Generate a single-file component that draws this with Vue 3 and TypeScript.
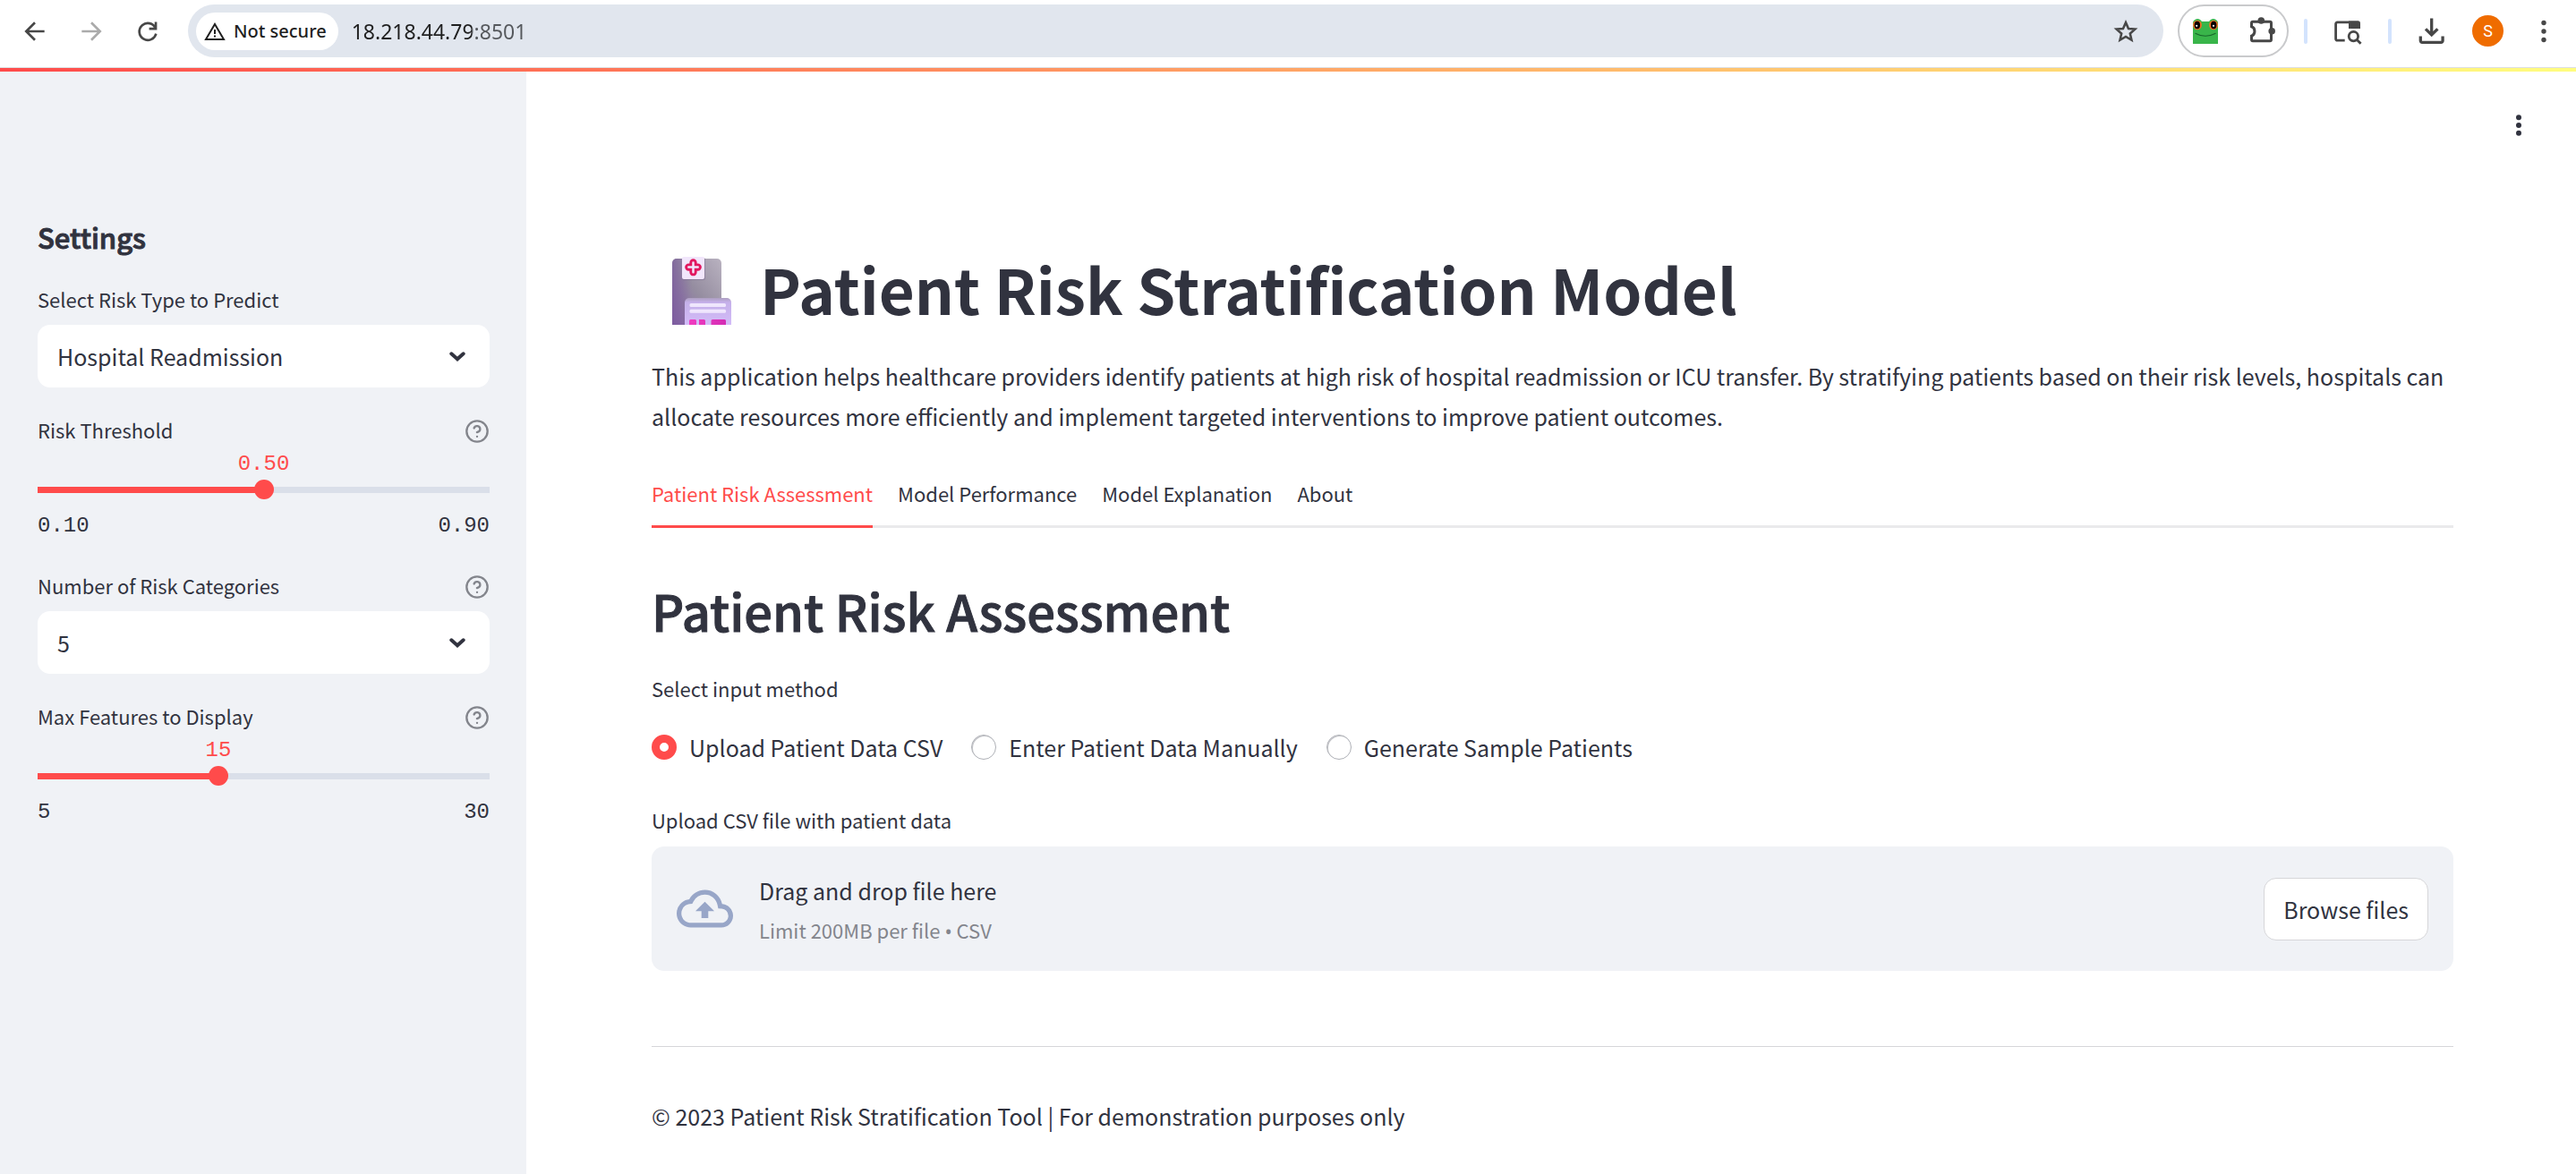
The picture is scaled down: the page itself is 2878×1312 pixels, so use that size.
<script setup lang="ts">
import { computed, ref } from 'vue'

interface Slider {
  min: number
  max: number
  step: number
  digits: number
}

const address = ref('18.218.44.79:8501')

const riskTypes = ['Hospital Readmission', 'ICU Transfer']
const riskType = ref(riskTypes[0])

const categoryOptions = [3, 4, 5]
const categories = ref(5)

const thresholdRange: Slider = { min: 0.1, max: 0.9, step: 0.05, digits: 2 }
const threshold = ref(0.5)

const featureRange: Slider = { min: 5, max: 30, step: 1, digits: 0 }
const features = ref(15)

const percent = (value: number, s: Slider): string =>
  `${((value - s.min) / (s.max - s.min)) * 100}%`

const thresholdAt = computed(() => percent(Number(threshold.value), thresholdRange))
const featuresAt = computed(() => percent(Number(features.value), featureRange))

const tabs = ['Patient Risk Assessment', 'Model Performance', 'Model Explanation', 'About']
const activeTab = ref(tabs[0])

const methods = ['Upload Patient Data CSV', 'Enter Patient Data Manually', 'Generate Sample Patients']
const method = ref(methods[0])

const fileInput = ref<HTMLInputElement | null>(null)
const browse = (): void => fileInput.value?.click()
</script>

<template>
  <div class="window">
    <header class="toolbar">
      <div class="nav">
        <button class="icon-btn" type="button" aria-label="Back">
          <svg viewBox="0 0 24 24" fill="none" stroke="#474747" stroke-width="2"><path d="M20 12H5.5M12 4.7L4.7 12l7.3 7.3" /></svg>
        </button>
        <button class="icon-btn" type="button" aria-label="Forward">
          <svg viewBox="0 0 24 24" fill="none" stroke="#ababab" stroke-width="2"><path d="M4 12h14.500M12 4.700l7.300 7.300-7.300 7.300" /></svg>
        </button>
        <button class="icon-btn" type="button" aria-label="Reload">
          <svg viewBox="0 0 24 24" fill="none" stroke="#474747" stroke-width="2"><path d="M18.800 4.200v5.600h-5.600M18.600 9.400A7.100 7.100 0 1 0 19 14" /></svg>
        </button>
      </div>

      <div class="omnibox">
        <button class="chip" type="button">
          <svg class="warn" viewBox="0 0 24 22" fill="none" stroke="#1f1f1f" stroke-width="2">
            <path d="M12 3L22 20H2z" /><path d="M12 9v5M12 15.500v2" />
          </svg>
          <span>Not secure</span>
        </button>
        <input v-model="address" class="address" type="text" aria-label="Address" />
        <button class="icon-btn" type="button" aria-label="Bookmark this page">
          <svg viewBox="0 0 24 24" fill="none" stroke="#474747" stroke-width="1.900">
            <path d="M12 4.600l2.250 5.100 5.550.5-4.200 3.700 1.250 5.400L12 16.450 7.150 19.300l1.250-5.400-4.200-3.700 5.550-.5z" />
          </svg>
        </button>
      </div>

      <div class="extensions">
        <button class="frog-btn" type="button" aria-label="Frog extension">
          <svg viewBox="0 0 28 28">
            <path d="M0 28V8h28v20z" fill="#39b54a" />
            <path d="M5 3h18v10H5z" fill="#39b54a" />
            <circle cx="5.200" cy="5.500" r="5.400" fill="#39b54a" /><circle cx="22.800" cy="5.500" r="5.400" fill="#39b54a" />
            <ellipse cx="5" cy="7" rx="4.900" ry="5.200" fill="#f26f21" /><ellipse cx="23" cy="7" rx="4.900" ry="5.200" fill="#f26f21" />
            <ellipse cx="4.800" cy="7" rx="3.200" ry="4.300" fill="#000" /><ellipse cx="23.200" cy="7" rx="3.200" ry="4.300" fill="#000" />
            <circle cx="4.200" cy="7.800" r="1.100" fill="#fff" /><circle cx="23" cy="7.800" r="1.100" fill="#fff" />
            <path d="M2.500 16.200q11.500 6 23 0" fill="none" stroke="#17662a" stroke-width="1.100" />
          </svg>
        </button>
        <button class="icon-btn" type="button" aria-label="Extensions">
          <svg viewBox="0 0 32 32">
            <path d="M3.500 10.700V6.800a1.500 1.500 0 0 1 1.500-1.500h19a1.500 1.500 0 0 1 1.500 1.500v18.400a1.500 1.500 0 0 1-1.500 1.500H5a1.500 1.500 0 0 1-1.500-1.500v-4.100c4.600-1.400 4.600-9 0-10.400z" fill="none" stroke="#474747" stroke-width="3" />
            <circle cx="14.300" cy="4" r="3.800" fill="#474747" /><circle cx="26.200" cy="15.800" r="3.800" fill="#474747" />
          </svg>
        </button>
      </div>

      <div class="actions">
        <span class="divider"></span>
        <button class="icon-btn" type="button" aria-label="Search side panel">
          <svg viewBox="0 0 32 32" fill="none" stroke="#474747" stroke-width="2.800">
            <path d="M12.700 26.200H4.400a1.800 1.800 0 0 1-1.800-1.800V7.700a1.800 1.800 0 0 1 1.800-1.800H28.200" />
            <path d="M17 4.500h11a2 2 0 0 1 2 2v6.500H17z" fill="#474747" stroke="none" />
            <circle cx="22.400" cy="21.600" r="5.200" /><path d="M26 25.200l4.600 4.600" />
          </svg>
        </button>
        <span class="divider"></span>
        <button class="icon-btn" type="button" aria-label="Downloads">
          <svg viewBox="0 0 32 32" fill="none" stroke="#474747" stroke-width="3.300">
            <path d="M15.700 1.500v18M9 13.300l6.700 6.700 6.700-6.700" />
            <path d="M3.300 21.500v5a1.800 1.800 0 0 0 1.800 1.800h21.200a1.800 1.800 0 0 0 1.800-1.800v-5" />
          </svg>
        </button>
        <button class="avatar" type="button" aria-label="Profile">S</button>
        <button class="icon-btn" type="button" aria-label="Browser menu">
          <svg viewBox="0 0 32 32" fill="#474747">
            <circle cx="16" cy="6.500" r="2.700" /><circle cx="16" cy="16" r="2.700" /><circle cx="16" cy="25.500" r="2.700" />
          </svg>
        </button>
      </div>
    </header>
    <div class="decoration"></div>

    <div class="app">
      <aside class="sidebar">
        <h2 class="side-title">Settings</h2>

        <div class="widget">
          <div class="label-row"><label for="risk-type">Select Risk Type to Predict</label></div>
          <div class="select-box">
            <select id="risk-type" v-model="riskType">
              <option v-for="t in riskTypes" :key="t" :value="t">{{ t }}</option>
            </select>
            <svg class="chevron" viewBox="0 0 18 11"><path d="M2.300 2.300L9 8.300l6.700-6" /></svg>
          </div>
        </div>

        <div class="widget slider">
          <div class="label-row">
            <label for="threshold">Risk Threshold</label>
            <button class="help" type="button" aria-label="Help for Risk Threshold">
              <svg viewBox="0 0 24 24"><circle cx="12" cy="12" r="10" /><path d="M9.090 9a3 3 0 0 1 5.830 1c0 2-3 3-3 3M12 17h.010" /></svg>
            </button>
          </div>
          <div class="value-row">
            <output class="value" for="threshold" :style="{ left: thresholdAt }">{{ Number(threshold).toFixed(thresholdRange.digits) }}</output>
          </div>
          <div class="track" :style="{ '--fill': thresholdAt }">
            <input id="threshold" v-model.number="threshold" type="range" :min="thresholdRange.min" :max="thresholdRange.max" :step="thresholdRange.step" />
          </div>
          <div class="ticks"><span>0.10</span><span>0.90</span></div>
        </div>

        <div class="widget">
          <div class="label-row">
            <label for="categories">Number of Risk Categories</label>
            <button class="help" type="button" aria-label="Help for Number of Risk Categories">
              <svg viewBox="0 0 24 24"><circle cx="12" cy="12" r="10" /><path d="M9.090 9a3 3 0 0 1 5.830 1c0 2-3 3-3 3M12 17h.010" /></svg>
            </button>
          </div>
          <div class="select-box">
            <select id="categories" v-model="categories">
              <option v-for="c in categoryOptions" :key="c" :value="c">{{ c }}</option>
            </select>
            <svg class="chevron" viewBox="0 0 18 11"><path d="M2.300 2.300L9 8.300l6.700-6" /></svg>
          </div>
        </div>

        <div class="widget slider">
          <div class="label-row">
            <label for="features">Max Features to Display</label>
            <button class="help" type="button" aria-label="Help for Max Features to Display">
              <svg viewBox="0 0 24 24"><circle cx="12" cy="12" r="10" /><path d="M9.090 9a3 3 0 0 1 5.830 1c0 2-3 3-3 3M12 17h.010" /></svg>
            </button>
          </div>
          <div class="value-row">
            <output class="value" for="features" :style="{ left: featuresAt }">{{ features }}</output>
          </div>
          <div class="track" :style="{ '--fill': featuresAt }">
            <input id="features" v-model.number="features" type="range" :min="featureRange.min" :max="featureRange.max" :step="featureRange.step" />
          </div>
          <div class="ticks"><span>5</span><span>30</span></div>
        </div>
      </aside>

      <main class="main">
        <div class="app-bar">
          <button class="icon-btn" type="button" aria-label="App menu">
            <svg viewBox="0 0 32 32" fill="#31333f">
              <circle cx="16" cy="7.200" r="3" /><circle cx="16" cy="16" r="3" /><circle cx="16" cy="24.800" r="3" />
            </svg>
          </button>
        </div>

        <h1 class="title">
          <svg class="hospital" viewBox="0 -6 66 82" aria-hidden="true">
            <defs>
              <linearGradient id="tower" x1="0" y1="1" x2="1" y2="0">
                <stop offset="0" stop-color="#8561a8" /><stop offset="0.500" stop-color="#958da0" /><stop offset="1" stop-color="#b9b2c0" />
              </linearGradient>
              <linearGradient id="towerSide" x1="0" y1="0" x2="1" y2="0">
                <stop offset="0" stop-color="#7a5a9c" stop-opacity="0.700" /><stop offset="0.400" stop-color="#7a5a9c" stop-opacity="0" />
              </linearGradient>
              <linearGradient id="ward" x1="0" y1="0" x2="0" y2="1">
                <stop offset="0" stop-color="#ad9fc0" /><stop offset="0.160" stop-color="#c5b0ea" /><stop offset="1" stop-color="#d3bcf8" />
              </linearGradient>
              <linearGradient id="windows" x1="0" y1="0" x2="1" y2="0">
                <stop offset="0" stop-color="#f03cc0" /><stop offset="1" stop-color="#d42cb4" />
              </linearGradient>
            </defs>
            <path d="M0 76V7a5 5 0 0 1 5-5h45a5 5 0 0 1 5 5v69z" fill="url(#tower)" />
            <path d="M0 76V7a5 5 0 0 1 5-5h45a5 5 0 0 1 5 5v69z" fill="url(#towerSide)" />
            <rect x="11" y="1" width="26" height="25" rx="2" fill="#7d6d92" opacity="0.500" />
            <rect x="11" y="0" width="25" height="25" rx="2" fill="#f1e6fb" />
            <path d="M20.800 8.900V6.400a2.700 2.700 0 0 1 5.400 0v2.500h2.500a2.700 2.700 0 0 1 0 5.400h-2.500v2.900a2.700 2.700 0 0 1-5.400 0v-2.900h-2.500a2.700 2.700 0 0 1 0-5.400z" fill="none" stroke="#e2175f" stroke-width="2.900" />
            <path d="M14 76V51a5 5 0 0 1 5-5h42a5 5 0 0 1 5 5v25z" fill="url(#ward)" />
            <rect x="19.500" y="52" width="40.500" height="4" rx="1.500" fill="#efe6fd" />
            <rect x="19.500" y="58.700" width="40.500" height="4" rx="1.500" fill="#efe6fd" />
            <path d="M19 76v-4.500a1.500 1.500 0 0 1 1.500-1.500h5a1.500 1.500 0 0 1 1.500 1.500V76zM30 76v-6h5.500a1.500 1.500 0 0 1 1.500 1.500V76zM43.500 76v-4.500a1.500 1.500 0 0 1 1.500-1.500h13.500a1.500 1.500 0 0 1 1.500 1.500V76z" fill="url(#windows)" />
          </svg>
          <span>Patient Risk Stratification Model</span>
        </h1>

        <p class="intro">
          This application helps healthcare providers identify patients at high risk of hospital readmission or ICU
          transfer. By stratifying patients based on their risk levels, hospitals can allocate resources more
          efficiently and implement targeted interventions to improve patient outcomes.
        </p>

        <div class="tabs" role="tablist">
          <button v-for="t in tabs" :key="t" class="tab" :class="{ active: t === activeTab }" type="button" role="tab" :aria-selected="t === activeTab" @click="activeTab = t">{{ t }}</button>
        </div>

        <h2 class="section-title">Patient Risk Assessment</h2>

        <fieldset class="methods">
          <legend class="field-label">Select input method</legend>
          <div class="radio-row">
            <label v-for="m in methods" :key="m" class="radio">
              <input v-model="method" type="radio" name="method" :value="m" />
              <span>{{ m }}</span>
            </label>
          </div>
        </fieldset>

        <label class="field-label upload-label" for="csv">Upload CSV file with patient data</label>
        <div class="dropzone">
          <svg class="cloud" viewBox="0 0 24 24" fill="#98a6c8" aria-hidden="true">
            <path d="M19.350 10.040A7.490 7.490 0 0 0 12 4C9.110 4 6.600 5.640 5.350 8.040A5.994 5.994 0 0 0 0 14c0 3.310 2.690 6 6 6h13c2.760 0 5-2.240 5-5 0-2.640-2.050-4.780-4.650-4.960zM19 18H6c-2.210 0-4-1.790-4-4 0-2.050 1.530-3.760 3.560-3.970l1.070-.11.5-.95A5.469 5.469 0 0 1 12 6c2.620 0 4.880 1.860 5.390 4.430l.3 1.500 1.530.11A2.980 2.980 0 0 1 22 15c0 1.650-1.350 3-3 3zM8 13h2.550v3h2.900v-3H16l-4-4-4 4z" />
          </svg>
          <div class="drop-text">
            <span class="drop-main">Drag and drop file here</span>
            <span class="drop-hint">Limit 200MB per file <span class="bullet">•</span> CSV</span>
          </div>
          <input id="csv" ref="fileInput" class="file" type="file" accept=".csv" />
          <button class="browse" type="button" @click="browse">Browse files</button>
        </div>

        <hr class="rule" />
        <p class="footer">© 2023 Patient Risk Stratification Tool | For demonstration purposes only</p>
      </main>
    </div>
  </div>
</template>

<style>
body {
  background: #fff;
}
</style>

<style scoped>
* {
  box-sizing: border-box;
}

.window {
  display: flex;
  flex-direction: column;
  min-height: 100vh;
  background: #fff;
  color: #31333f;
  font-family: "Noto Sans CJK SC", "Noto Sans", sans-serif;
  font-size: 25px;
}

button,
input,
select {
  margin: 0;
  padding: 0;
  border: 0;
  background: none;
  color: inherit;
  font: inherit;
}

h1,
h2,
p {
  margin: 0;
}

/* Browser toolbar */
.toolbar {
  display: flex;
  align-items: center;
  padding: 5px 20px 11px 23px;
  border-bottom: 1px solid #dcdfe2;
  font-family: "Noto Sans", "Open Sans", sans-serif;
}

.nav {
  display: flex;
  gap: 31px;
  margin-right: 29px;
}

.icon-btn {
  display: block;
  flex: none;
  width: 32px;
  height: 32px;
}

.icon-btn svg {
  display: block;
  width: 32px;
  height: 32px;
}

.omnibox {
  display: flex;
  flex: 1;
  align-items: center;
  height: 59px;
  padding: 0 26px 0 9px;
  border-radius: 30px;
  background: #e1e6ee;
}

.chip {
  display: flex;
  align-items: center;
  gap: 9px;
  height: 42px;
  padding: 0 13px 0 9px;
  border-radius: 21px;
  background: #fff;
  color: #1f1f1f;
  font-size: 20px;
  font-weight: 500;
  white-space: nowrap;
}

.warn {
  width: 24px;
  height: 22px;
}

.address {
  flex: 1;
  min-width: 0;
  height: 42px;
  margin-left: 15px;
  outline: none;
  background: linear-gradient(90deg, #1f1f1f 134px, #55585c 134px) text;
  color: #1f1f1f;
  font-size: 23px;
  -webkit-text-fill-color: transparent;
}

.extensions {
  display: flex;
  align-items: center;
  gap: 34px;
  height: 59px;
  margin: 0 17px 0 16px;
  padding: 0 11px 0 15px;
  border: 2px solid #c9cacc;
  border-radius: 30px;
}

.frog-btn,
.frog-btn svg {
  display: block;
  width: 28px;
  height: 28px;
}

.actions {
  display: flex;
  align-items: center;
  gap: 29px;
}

.divider {
  width: 4px;
  height: 28px;
  border-radius: 2px;
  background: #d3e3fd;
}

.avatar {
  width: 35px;
  height: 35px;
  border-radius: 50%;
  background: #ef6c00;
  color: #fff;
  font-family: Roboto, sans-serif;
  font-size: 18px;
  text-align: center;
}

.decoration {
  height: 4px;
  background: linear-gradient(90deg, #ff4b4b, #fffd80);
}

/* Application */
.app {
  display: flex;
  flex: 1;
}

.sidebar {
  display: flex;
  flex: none;
  flex-direction: column;
  gap: 28px;
  width: 588px;
  padding: 163px 41px 42px 42px;
  background: #f0f2f6;
}

.side-title {
  font-size: 31px;
  font-weight: 500;
  line-height: 44px;
}

/* Medium weight thickened to a semibold */
.side-title,
.section-title {
  -webkit-text-stroke: 1px currentColor;
}

.label-row {
  display: flex;
  align-items: center;
  justify-content: space-between;
  height: 38px;
  font-size: 22px;
  line-height: 38px;
}

.help {
  padding-top: 4px;
}

.help svg {
  display: block;
  width: 28px;
  height: 28px;
  fill: none;
  stroke: #83858c;
  stroke-width: 2;
  stroke-linecap: round;
}

.select-box {
  display: grid;
  align-items: center;
  margin-top: 10px;
}

.select-box select {
  grid-area: 1 / 1;
  width: 100%;
  height: 70px;
  padding: 0 60px 0 22px;
  border-radius: 14px;
  background: #fff;
  appearance: none;
}

.chevron {
  grid-area: 1 / 1;
  justify-self: end;
  width: 18px;
  height: 11px;
  margin-right: 27px;
  fill: none;
  stroke: #31333f;
  stroke-width: 4;
  stroke-linecap: round;
  pointer-events: none;
}

.slider {
  padding-bottom: 4px;
}

.value-row {
  position: relative;
  height: 30px;
  margin: 5px 0 2px;
}

.value,
.ticks {
  font-family: "Liberation Mono", monospace;
  font-size: 24px;
  line-height: 30px;
}

.value {
  position: absolute;
  color: #ff4b4b;
  transform: translateX(-50%);
}

.track {
  height: 22px;
  background:
    linear-gradient(90deg, #ff4b4b var(--fill), #dadfe9 var(--fill)) center / 100% 7px no-repeat;
}

.track input {
  display: block;
  width: calc(100% + 22px);
  height: 22px;
  margin: 0 -11px;
  appearance: none;
}

.track input::-webkit-slider-thumb {
  width: 22px;
  height: 22px;
  border-radius: 50%;
  background: #ff4b4b;
  appearance: none;
}

.ticks {
  display: flex;
  justify-content: space-between;
  margin-top: 15px;
}

.main {
  flex: 1;
  min-width: 0;
  padding: 44px 137px 42px 140px;
}

.app-bar {
  display: flex;
  justify-content: flex-end;
  margin: 0 -89px 120px 0;
}

.title {
  display: flex;
  align-items: center;
  gap: 32px;
  padding-left: 23px;
  font-size: 69px;
  font-weight: 700;
  line-height: 92px;
}

.hospital {
  flex: none;
  width: 66px;
  height: 82px;
}

.intro {
  margin-top: 30px;
  line-height: 45px;
}

.tabs {
  display: flex;
  gap: 28px;
  margin-top: 28px;
  box-shadow: inset 0 -3px #eaeaec;
}

.tab {
  height: 74px;
  padding-bottom: 2px;
  border-bottom: 3px solid transparent;
  font-size: 22px;
}

.tab.active {
  border-color: #ff4b4b;
  color: #ff4b4b;
}

.section-title {
  margin-top: 58px;
  font-size: 56px;
  font-weight: 500;
  line-height: 68px;
}

.methods {
  margin: 34px 0 0;
  padding: 0;
  border: 0;
}

.field-label {
  display: block;
  padding: 0;
  font-size: 22px;
  line-height: 38px;
}

.radio-row {
  display: flex;
  gap: 32px;
  margin-top: 27px;
}

.radio {
  display: flex;
  align-items: center;
  gap: 14px;
  line-height: 40px;
}

.radio input {
  width: 28px;
  height: 28px;
  border: 1px solid #aeb0b6;
  border-radius: 50%;
  background: #fff;
  box-shadow: inset 1px 1px #c4c5c9;
  appearance: none;
}

.radio input:checked {
  border: 9px solid #ff4b4b;
  box-shadow: none;
}

.upload-label {
  margin-top: 42px;
}

.dropzone {
  display: flex;
  align-items: center;
  gap: 29px;
  min-height: 139px;
  margin-top: 11px;
  padding: 0 28px;
  border-radius: 14px;
  background: #f0f2f6;
}

.cloud {
  flex: none;
  width: 63px;
  height: 63px;
}

.drop-text {
  display: flex;
  flex: 1;
  flex-direction: column;
  padding-top: 3px;
  line-height: 44px;
}

.drop-hint {
  color: #83858c;
  font-size: 22px;
}

.bullet {
  font-family: "Noto Sans", sans-serif;
}

.file {
  display: none;
}

.browse {
  height: 70px;
  padding: 0 21px;
  border: 1px solid #d6d6d9;
  border-radius: 14px;
  background: #fff;
}

.rule {
  height: 1px;
  margin: 84px 0 55px;
  border: 0;
  background: #d6d6d9;
}

.footer {
  line-height: 45px;
}
</style>
